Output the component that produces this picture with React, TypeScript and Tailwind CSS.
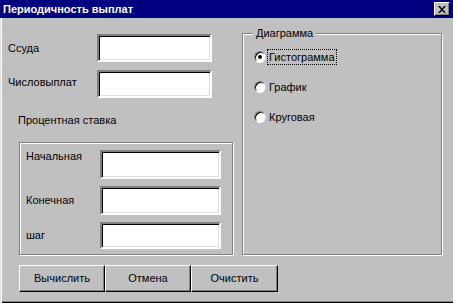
const font = { fontFamily: '"Liberation Sans", Arial, sans-serif' };

// sunken white edit box, classic Win95 style
const Field = ({ className }: { className: string }) => (
  <div
    className={`bg-white border-2 border-t-[#808080] border-l-[#808080] border-b-white border-r-white shadow-[inset_1px_1px_#000,inset_-1px_-1px_#dfdfdf] ${className}`}
  />
);

const Radio = ({ label, checked, focused }: { label: string; checked?: boolean; focused?: boolean }) => (
  <div className="flex items-center h-[16px]">
    <div className="relative w-[12px] h-[12px] rounded-full bg-white border border-t-[#808080] border-l-[#808080] border-b-white border-r-[#dfdfdf] shadow-[inset_1px_1px_#000]">
      {checked && <div className="absolute left-[3px] top-[3px] w-[4px] h-[4px] rounded-full bg-black" />}
    </div>
    <span
      className={`ml-[1px] px-[1px] leading-[14px] text-[11px] text-black border border-dotted ${
        focused ? "border-black" : "border-transparent"
      }`}
    >
      {label}
    </span>
  </div>
);

const Button = ({ label, className }: { label: string; className: string }) => (
  <button
    className={`h-[27px] bg-[#c0c0c0] text-[11px] text-black border border-t-white border-l-white border-r-black border-b-black shadow-[inset_-1px_-1px_#808080] ${className}`}
  >
    {label}
  </button>
);

export default function App() {
  return (
    <div className="w-[453px] h-[303px] bg-[#c0c0c0] flex flex-col overflow-hidden" style={font}>
      {/* Title bar */}
      <div className="h-[18px] bg-[#000080] flex items-center justify-between pl-[3px] pr-[3px]">
        <span className="text-white font-bold text-[11px] leading-none">Периодичность выплат</span>
        <div className="w-[16px] h-[14px] bg-[#c0c0c0] border border-t-white border-l-white border-r-black border-b-black shadow-[inset_-1px_-1px_#808080] flex items-center justify-center">
          <svg width="8" height="7" viewBox="0 0 8 7">
            <path d="M0 0h2l2 2.5L6 0h2L5 3.5 8 7H6L4 4.5 2 7H0l3-3.5z" fill="#000" />
          </svg>
        </div>
      </div>

      {/* Body */}
      <div className="flex-1 flex flex-col shadow-[inset_1px_0_#dfdfdf,inset_2px_0_#fff,inset_0_-1px_#000,inset_0_-2px_#808080]">
        <div className="flex items-start">
          {/* Left column */}
          <div className="w-[242px] pt-[16px]">
            <div className="flex items-center pl-[8px] h-[28px]">
              <span className="w-[89px] text-[11px] text-black">Ссуда</span>
              <Field className="w-[115px] h-[28px]" />
            </div>
            <div className="flex items-center pl-[8px] h-[28px] mt-[8px]">
              <span className="w-[89px] text-[11px] text-black -mt-[3px]">Числовыплат</span>
              <Field className="w-[115px] h-[28px]" />
            </div>
            <div className="pl-[18px] mt-[15px] h-[14px] mb-[15px] text-[11px] leading-[14px] text-black">
              Процентная ставка
            </div>
            <div className="ml-[19px] w-[214px] h-[113px] border border-[#808080] shadow-[inset_1px_1px_#fff,1px_1px_#fff] pt-[7px] pl-[6px] flex flex-col gap-[7px]">
              <div className="flex items-start">
                <span className="w-[74px] text-[11px] leading-[14px] text-black -mt-[1px]">Начальная</span>
                <Field className="w-[121px] h-[29px]" />
              </div>
              <div className="flex items-center">
                <span className="w-[74px] text-[11px] text-black">Конечная</span>
                <Field className="w-[121px] h-[29px]" />
              </div>
              <div className="flex items-center">
                <span className="w-[74px] text-[11px] text-black">шаг</span>
                <Field className="w-[121px] h-[27px]" />
              </div>
            </div>
          </div>

          {/* Diagram group */}
          <div className="relative mt-[15px] w-[200px] h-[222px] border border-[#808080] shadow-[inset_1px_1px_#fff,1px_1px_#fff] pt-[15px] pl-[11px] flex flex-col gap-[14px]">
            <span className="absolute left-[10px] top-[-8px] px-[3px] bg-[#c0c0c0] text-[11px] leading-[14px] text-black">
              Диаграмма
            </span>
            <Radio label="Гистограмма" checked focused />
            <Radio label="График" />
            <Radio label="Круговая" />
          </div>
        </div>

        {/* Buttons */}
        <div className="flex pl-[19px] mt-[10px]">
          <Button label="Вычислить" className="w-[86px]" />
          <Button label="Отмена" className="w-[86px]" />
          <Button label="Очистить" className="w-[87px]" />
        </div>
      </div>
    </div>
  );
}
